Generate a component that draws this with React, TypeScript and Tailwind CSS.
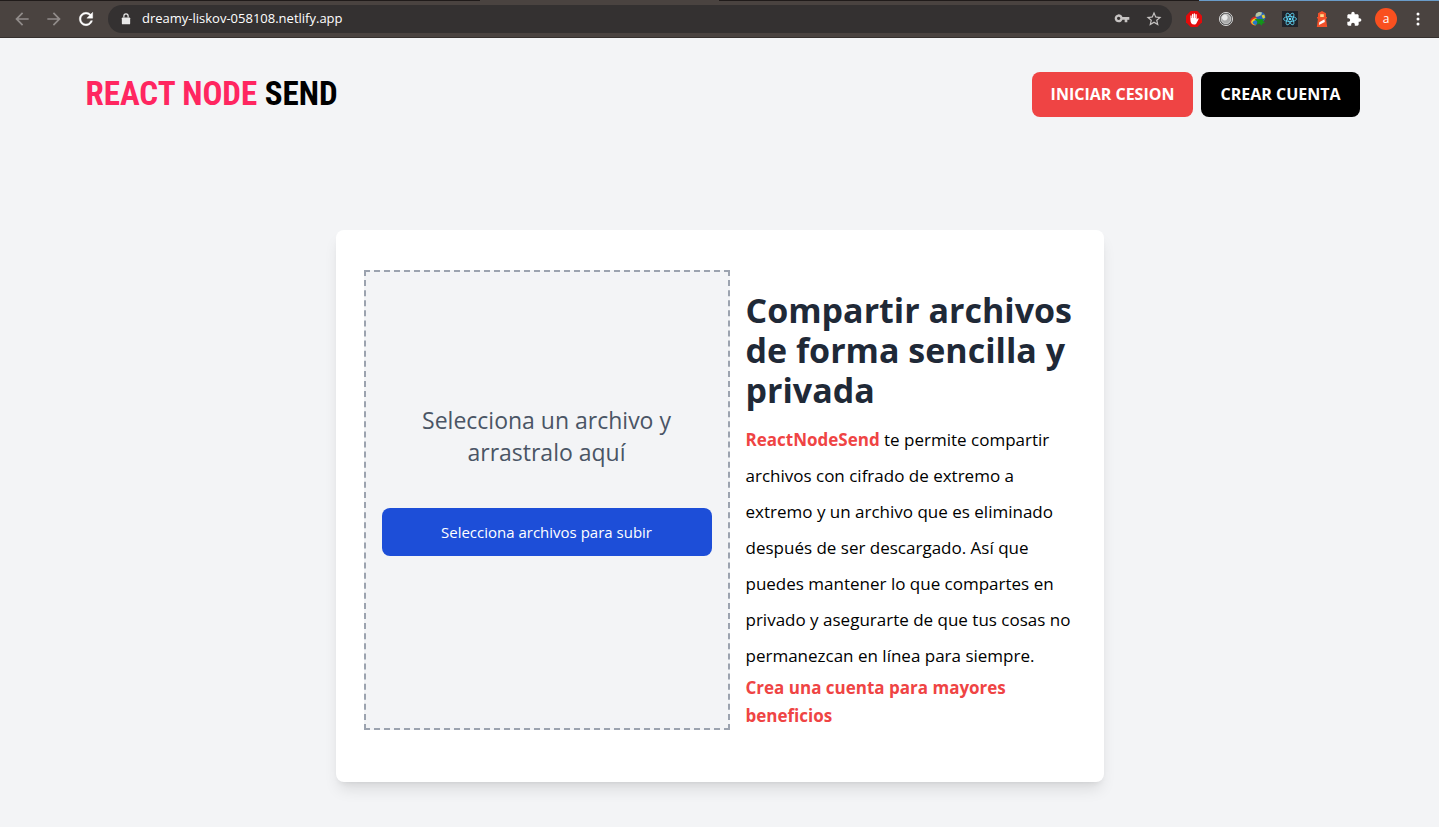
import type { ReactNode } from "react";

function IconButton({ label, children }: { label: string; children: ReactNode }) {
  return (
    <button type="button" aria-label={label} className="flex size-8 shrink-0 items-center justify-center">
      {children}
    </button>
  );
}

const arrowBack = "M20 11H7.83l5.59-5.59L12 4l-8 8 8 8 1.41-1.41L7.83 13H20v-2z";
const arrowForward = "M12 4l-1.41 1.41L16.17 11H4v2h12.17l-5.58 5.59L12 20l8-8z";

function Extensions() {
  return (
    <>
      <IconButton label="Bloqueador de anuncios">
        <svg viewBox="0 0 16 16" className="size-4">
          <path d="M4.7 0h6.6L16 4.7v6.6L11.3 16H4.7L0 11.3V4.7z" fill="#e30b0b" />
          <path d="M4.400 8.200V5c0-.9 1.200-.9 1.200 0v2h.4V3.400c0-.9 1.300-.9 1.300 0V7h.4V2.800c0-.9 1.300-.9 1.300 0V7h.4V3.600c0-.9 1.300-.9 1.300 0v5l.9-1.100c.6-.6 1.300 0 .9.700l-1.900 3.700c-.5 1-1.200 1.500-2.400 1.500-2.700 0-3.800-1.600-3.800-5.200z" fill="#fff" />
        </svg>
      </IconButton>
      <IconButton label="Captura">
        <svg viewBox="0 0 16 16" className="size-4">
          <circle cx="8" cy="8" r="6.600" fill="#4f4f4f" stroke="#dedede" strokeWidth=".9" />
          <circle cx="8" cy="8" r="4.900" fill="#a9a9a9" stroke="#dadada" strokeWidth=".8" />
          <circle cx="6.800" cy="6.600" r="2.800" fill="#e9e9e9" />
        </svg>
      </IconButton>
      <IconButton label="Descargas">
        <svg viewBox="0 0 16 16" className="size-4">
          <circle cx="10.300" cy="6" r="5.200" fill="#2863b8" />
          <path d="M6 2.800c1.600-2 4.200-2.300 6-1.200l-.7 2.500-3 1.300L5.500 6c0-1.300.1-2.400.5-3.200z" fill="#b8c7a0" />
          <path d="M11.500 4.600l2.700-1 1 2.800-2.200 1.400z" fill="#e0cf3a" />
          <path d="M0 10.500C.700 7 3.200 5.400 6 5.500l1 6-2.300 3C2 14 .500 12.700 0 10.500z" fill="#d92e20" />
          <path d="M1 11C2 8.300 4 7 6.500 7.200l.5 5-1.500 2.200C3 14 1.500 13 1 11z" fill="#f2cf23" />
          <path d="M2.500 11.500c.8-1.800 2.300-2.700 4.500-2.500l.5 3.500-1.700 1.400c-1.700-.1-2.800-.9-3.300-2.400z" fill="#2777c9" />
          <path d="M4.500 8l10 .3-1.500 1.800 2 2-2.600.3-.4 2.400-2.700-2.200-2.800 1.200 1.200-2.700z" fill="#12951a" />
        </svg>
      </IconButton>
      <IconButton label="React Developer Tools">
        <svg viewBox="0 0 16 16" className="size-4">
          <path d="M0 0h16v16H0z" fill="#20232a" />
          <circle cx="8" cy="8" r="1.3" fill="#61dafb" />
          <g fill="none" stroke="#61dafb" strokeWidth=".8">
            <ellipse cx="8" cy="8" rx="6.500" ry="2.500" />
            <ellipse cx="8" cy="8" rx="6.500" ry="2.500" transform="rotate(60 8 8)" />
            <ellipse cx="8" cy="8" rx="6.500" ry="2.500" transform="rotate(120 8 8)" />
          </g>
        </svg>
      </IconButton>
      <IconButton label="Lighthouse">
        <svg viewBox="0 0 16 16" className="size-4">
          <path d="M8 0l4 2.300V6h1v1.500h-1l1.200 8.500H2.800L4 7.500H3V6h1V2.300z" fill="#f0512a" />
          <path d="M6.200 3.200h3.600V6H6.200z" fill="#ffd98a" />
          <path d="M5.300 11.200l5.200-2.900.3 2.600-5.900 3z" fill="#fff" />
        </svg>
      </IconButton>
      <IconButton label="Extensiones">
        <svg viewBox="0 0 24 24" className="size-4" fill="#fff">
          <path d="M20.500 11H19V7c0-1.100-.9-2-2-2h-4V3.500C13 2.120 11.880 1 10.500 1S8 2.120 8 3.500V5H4c-1.100 0-1.990.9-1.990 2v3.800H3.500c1.490 0 2.700 1.210 2.700 2.700s-1.210 2.700-2.700 2.700H2V20c0 1.100.9 2 2 2h3.800v-1.500c0-1.490 1.210-2.700 2.700-2.700 1.490 0 2.700 1.210 2.700 2.700V22H17c1.100 0 2-.9 2-2v-4h1.500c1.380 0 2.500-1.120 2.500-2.500S21.880 11 20.500 11z" />
        </svg>
      </IconButton>
    </>
  );
}

function BrowserBar() {
  return (
    <div className="border-b border-[#35302e] bg-[#4a4340] font-['Open_Sans',sans-serif]">
      <div className="flex h-px">
        <div className="w-1/3 bg-[#201b1a]" />
        <div className="w-1/6" />
        <div className="w-1/3 bg-[#201b1a]" />
        <div className="w-1/6 bg-[#6a9cc9]" />
      </div>
      <div className="flex h-9 items-center pr-[5px] pl-1.5">
        <IconButton label="Atrás">
          <svg viewBox="0 0 24 24" className="size-5" fill="#918c8a"><path d={arrowBack} /></svg>
        </IconButton>
        <IconButton label="Adelante">
          <svg viewBox="0 0 24 24" className="size-5" fill="#918c8a"><path d={arrowForward} /></svg>
        </IconButton>
        <IconButton label="Recargar">
          <svg viewBox="0 0 24 24" className="size-5" fill="#fff" stroke="#fff" strokeWidth=".5">
            <path d="M17.650 6.350C16.200 4.900 14.210 4 12 4c-4.420 0-7.990 3.580-7.990 8s3.570 8 7.990 8c3.730 0 6.840-2.550 7.730-6h-2.080c-.82 2.330-3.040 4-5.650 4-3.310 0-6-2.690-6-6s2.690-6 6-6c1.660 0 3.140.69 4.220 1.780L13 11h7V4l-2.350 2.350z" />
          </svg>
        </IconButton>
        <div className="ml-1.5 flex h-7 min-w-0 flex-1 items-center rounded-full bg-[#343131] pr-0.5 pl-3">
          <svg viewBox="0 0 10 13" className="h-3 w-3 shrink-0" aria-hidden="true">
            <path d="M2.700 5V3.300a2.300 2.300 0 0 1 4.600 0V5" fill="none" stroke="#e8e8e8" strokeWidth="1.300" />
            <rect x=".5" y="4.800" width="9" height="7.500" rx="1" fill="#e8e8e8" />
          </svg>
          <input
            aria-label="Dirección"
            defaultValue="dreamy-liskov-058108.netlify.app"
            className="ml-2.5 min-w-0 flex-1 bg-transparent text-[13px] text-white outline-none"
          />
          <IconButton label="Contraseñas">
            <svg viewBox="0 0 24 24" className="size-4" fill="#c6c3c2">
              <path fillRule="evenodd" d="M12.650 9C11.700 6.300 9.100 4.700 6.200 5.100 3.400 5.500 1.100 7.900 1 10.800c-.1 3.400 2.600 6.200 6 6.200 2.600 0 4.800-1.700 5.650-4H16v4h4v-4h3V9H12.650zM7 13.500c-1.400 0-2.500-1.100-2.500-2.500s1.100-2.500 2.500-2.500 2.500 1.100 2.500 2.500-1.100 2.500-2.500 2.500z" />
            </svg>
          </IconButton>
          <IconButton label="Añadir a marcadores">
            <svg viewBox="0 0 24 24" className="size-[18px]" fill="#c6c3c2">
              <path d="M22 9.240l-7.190-.62L12 2 9.190 8.630 2 9.240l5.460 4.730L5.820 21 12 17.270 18.180 21l-1.630-7.030L22 9.240zM12 15.400l-3.760 2.270 1-4.280-3.320-2.880 4.380-.38L12 6.100l1.710 4.040 4.380.38-3.320 2.880 1 4.280L12 15.400z" />
            </svg>
          </IconButton>
        </div>
        <div className="ml-1.5 flex">
          <Extensions />
          <IconButton label="Perfil">
            <span className="flex size-[22px] items-center justify-center rounded-full bg-[#f9501f] text-xs leading-none text-white">
              a
            </span>
          </IconButton>
          <IconButton label="Menú">
            <svg viewBox="0 0 16 16" className="size-4" fill="#fff">
              <circle cx="8" cy="3" r="1.500" /><circle cx="8" cy="8" r="1.500" /><circle cx="8" cy="13" r="1.500" />
            </svg>
          </IconButton>
        </div>
      </div>
    </div>
  );
}

export default function App() {
  return (
    <div className="flex min-h-screen flex-col bg-gray-100 font-['Open_Sans',sans-serif] text-black">
      <BrowserBar />
      <div className="mx-auto w-full max-w-7xl">
        <header className="flex items-center justify-between pt-8 pl-1.5">
          <a href="#" className="font-['Liberation_Sans_Narrow','Roboto_Condensed','Open_Sans',sans-serif] text-[33px] leading-12 font-bold">
            <span className="text-[#ff2660]">REACT NODE</span> SEND
          </a>
          <nav className="flex gap-2">
            <a href="#" className="rounded-lg bg-[#ef4444] px-[19px] py-3 text-base leading-[21px] font-bold text-white">
              INICIAR CESION
            </a>
            <a href="#" className="rounded-lg bg-black px-[19px] py-3 text-base leading-[21px] font-bold text-white">
              CREAR CUENTA
            </a>
          </nav>
        </header>
        <main className="pt-28 pb-11">
          <section className="mx-auto grid max-w-3xl grid-cols-[366fr_330fr] gap-4 rounded-lg bg-white px-7 pt-10 pb-13 shadow-lg">
            <div className="flex flex-col items-center justify-center border-2 border-dashed border-[#9ca3af] bg-gray-100 px-4 pb-14">
              <p className="px-8 pt-4 text-center text-[23px] leading-8 text-gray-600">
                Selecciona un archivo y arrastralo aquí
              </p>
              <button type="button" className="mt-10 h-12 w-full rounded-lg bg-[#1d4ed8] text-[15px] text-white">
                Selecciona archivos para subir
              </button>
            </div>
            <div className="pt-5">
              <h1 className="text-[34px] leading-10 font-bold text-[#1f2937]">
                Compartir archivos de forma sencilla y privada
              </h1>
              <p className="mt-3 text-[17px] leading-9">
                <span className="font-bold text-[#ef4444]">ReactNodeSend</span> te permite compartir archivos con
                cifrado de extremo a extremo y un archivo que es eliminado después de ser descargado. Así que puedes
                mantener lo que compartes en privado y asegurarte de que tus cosas no permanezcan en línea para siempre.
              </p>
              <a href="#" className="block text-[17px] leading-7 font-bold text-[#ef4444]">
                Crea una cuenta para mayores beneficios
              </a>
            </div>
          </section>
        </main>
      </div>
    </div>
  );
}
